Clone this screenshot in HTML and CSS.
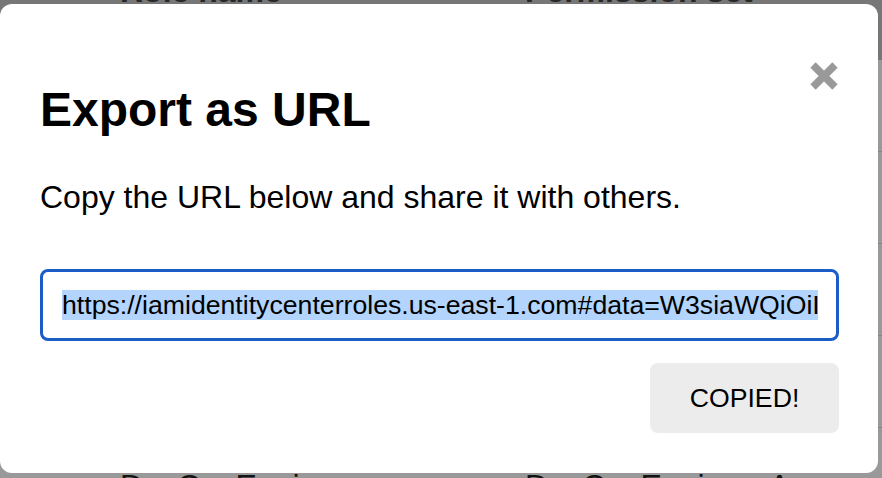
FILE: index.html
```html
<!DOCTYPE html>
<html lang="en">
<head>
  <meta charset="UTF-8">
  <title>Export as URL</title>
  <link rel="stylesheet" href="styles.css">
</head>
<body>
  <div class="page">
    <div class="table-head">
      <span class="col">Role name</span>
      <span class="col">Permission set</span>
    </div>
    <div class="row"><span class="col">Administrator</span><span class="col">AdminAccess</span></div>
    <div class="row"><span class="col">BillingManager</span><span class="col">BillingAccess</span></div>
    <div class="row"><span class="col">DataAnalyst</span><span class="col">ReadOnlyAccess</span></div>
    <div class="row"><span class="col">Developer</span><span class="col">PowerUserAccess</span></div>
    <div class="row"><span class="col">DevOpsEngineer</span><span class="col">DevOpsEngineerAccess</span></div>
  </div>

  <div class="overlay"></div>

  <div class="modal">
    <button class="close" aria-label="Close">
      <svg width="28" height="28" viewBox="0 0 28 28">
        <path d="M3 3 L25 25 M25 3 L3 25" stroke="#999" stroke-width="7.5" fill="none"/>
      </svg>
    </button>
    <h1>Export as URL</h1>
    <p>Copy the URL below and share it with others.</p>
    <div class="url-field">
      <div class="url-text"><span class="selected">https://iamidentitycenterroles.us-east-1.com#data=W3siaWQiOiIxIiwibmFtZSI6IkRldk9wc0VuZ2luZWVyIn1d</span></div>
    </div>
    <div class="actions">
      <button class="copy-button">COPIED!</button>
    </div>
  </div>
</body>
</html>
```

FILE: styles.css
```css
body {
  margin: 0;
  background: white;
  color: black;
  font-family: "Liberation Sans", Arial, sans-serif;
  overflow: hidden;
}
.page {
  margin-top: -32px;
}
.table-head,
.row {
  display: grid;
  grid-template-columns: 405px auto;
  padding-left: 120px;
  font-size: 32px;
  line-height: 37px;
}
.table-head {
  height: 92px;
  padding-top: 5px;
  box-sizing: border-box;
  background: #c6c6c6;
  color: #444;
  font-weight: bold;
}
.row {
  padding-top: 40px;
  padding-bottom: 14px;
  border-bottom: 1px solid #ddd;
  color: #222;
}
.overlay {
  position: fixed;
  inset: 0;
  background: rgba(0, 0, 0, 0.4);
}
.modal {
  position: fixed;
  left: 0;
  top: 4px;
  width: 878px;
  height: 469px;
  box-sizing: border-box;
  padding: 78px 39px 40px 40px;
  background: white;
  border-radius: 12px;
}
.close {
  position: absolute;
  top: 58px;
  right: 40px;
  width: 28px;
  height: 28px;
  padding: 0;
  border: none;
  background: none;
  cursor: pointer;
}
.close svg {
  display: block;
}
h1 {
  margin: 0;
  font-size: 48px;
  line-height: 56px;
  font-weight: bold;
}
p {
  margin: 41px 0 0;
  font-size: 32px;
  line-height: 37px;
}
.url-field {
  margin-top: 53px;
  padding: 18px 18px 17px 19px;
  border: 3px solid #1b5cc6;
  border-radius: 8px;
  font-size: 26.67px;
  line-height: 31px;
}
.url-text {
  overflow: hidden;
  white-space: nowrap;
}
.selected {
  background: #b3d4fc;
}
.actions {
  display: flex;
  justify-content: flex-end;
  margin-top: 22px;
}
.copy-button {
  width: 189px;
  height: 70px;
  border: none;
  border-radius: 8px;
  background: #ececec;
  color: black;
  font-family: "Liberation Sans", Arial, sans-serif;
  font-size: 26.67px;
  cursor: pointer;
}
```
